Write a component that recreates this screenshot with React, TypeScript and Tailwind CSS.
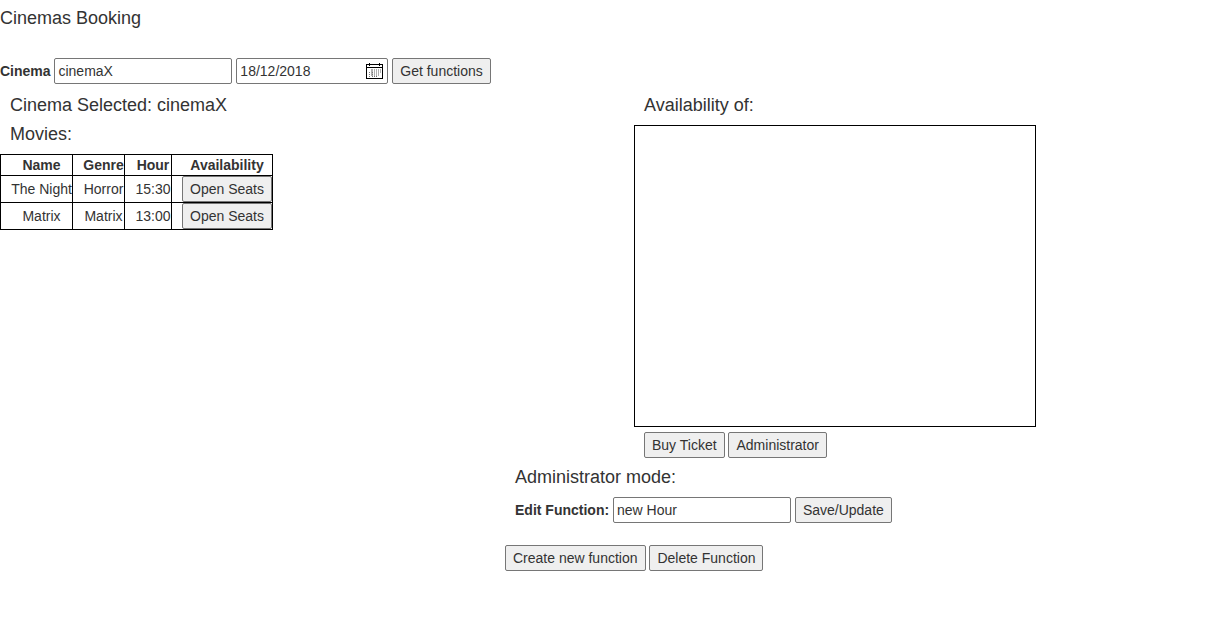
import type { ReactNode } from "react";

const functions = [
  { name: "The Night", genre: "Horror", hour: "15:30" },
  { name: "Matrix", genre: "Matrix", hour: "13:00" },
];

function Button({ children }: { children: ReactNode }) {
  return (
    <button
      type="button"
      className="h-[26px] whitespace-nowrap rounded-[2px] border border-[#767676] bg-[#efefef] px-[7px] align-middle hover:bg-[#e5e5e5]"
    >
      {children}
    </button>
  );
}

function Heading({ children }: { children: ReactNode }) {
  return <h4 className="pl-2.5 text-lg leading-5">{children}</h4>;
}

function CalendarIcon() {
  return (
    <svg width="17" height="16" viewBox="0 0 17 16" shapeRendering="crispEdges" aria-hidden="true">
      <path fill="#000" fillRule="evenodd" d="M0 1h17v15H0zM1 2v2h15V2zM1 5v10h15V5z" />
      <path fill="#000" d="M3 0h1v3H3zM13 0h1v3h-1z" />
      <path
        fill="#b0b0b0"
        d="M5 6h2v7H5zM8 6h1v7H8zM10 6h1v7h-1zM12 6h1v7h-1zM14 6h1v4h-1z"
      />
      <path
        fill="#777"
        d="M3 9h1v1H3zM3 11h1v1H3zM3 13h1v1H3zM6 9h1v1H6zM6 11h1v1H6zM6 13h1v1H6zM8 13h1v1H8zM10 13h1v1h-1z"
      />
    </svg>
  );
}

export default function App() {
  return (
    <div className="bg-white pb-12 pt-2 font-['Liberation_Sans',Arial,sans-serif] text-sm leading-5 text-[#333]">
      <h4 className="text-lg leading-5">Cinemas Booking</h4>

      <form className="mt-[30px]">
        <label htmlFor="cinema" className="align-middle font-bold">
          Cinema
        </label>{" "}
        <input
          id="cinema"
          defaultValue="cinemaX"
          className="h-[26px] w-[178px] rounded-[2px] border border-[#767676] px-[3px] align-middle"
        />{" "}
        <div className="inline-flex h-[26px] w-[152px] items-center rounded-[2px] border border-[#767676] pl-[3px] pr-1 align-middle">
          <input
            aria-label="Date"
            defaultValue="18/12/2018"
            className="min-w-0 flex-1 outline-none"
          />
          <button type="button" aria-label="Open calendar">
            <CalendarIcon />
          </button>
        </div>{" "}
        <Button>Get functions</Button>
      </form>

      <main className="mt-[11px] grid grid-cols-[317fr_289fr]">
        <section>
          <Heading>Cinema Selected: cinemaX</Heading>
          <div className="mt-[9px]">
            <Heading>Movies:</Heading>
          </div>
          <table className="mt-2.5 border-collapse text-center [&_td]:border [&_td]:border-black [&_td]:p-0 [&_td]:pl-2.5 [&_th]:border [&_th]:border-black [&_th]:p-0 [&_th]:pl-2.5">
            <thead>
              <tr>
                <th className="min-w-[72px]">Name</th>
                <th className="min-w-[52px]">Genre</th>
                <th className="min-w-[47px]">Hour</th>
                <th className="min-w-[101px]">Availability</th>
              </tr>
            </thead>
            <tbody>
              {functions.map((f) => (
                <tr key={f.name}>
                  <td>{f.name}</td>
                  <td>{f.genre}</td>
                  <td>{f.hour}</td>
                  <td>
                    <div className="flex">
                      <Button>Open Seats</Button>
                    </div>
                  </td>
                </tr>
              ))}
            </tbody>
          </table>
        </section>

        <section>
          <Heading>Availability of:</Heading>
          <canvas
            width={400}
            height={300}
            aria-label="Seats"
            className="mt-2.5 box-content block border border-black"
          />
          <div className="mt-[5px] pl-2.5">
            <Button>Buy Ticket</Button> <Button>Administrator</Button>
          </div>
        </section>
      </main>

      <div className="mt-[9px] grid grid-cols-12">
        <section className="col-span-7 col-start-6">
          <Heading>Administrator mode:</Heading>
          <div className="mt-2.5 pl-2.5">
            <label htmlFor="hour" className="align-middle font-bold">
              Edit Function:
            </label>{" "}
            <input
              id="hour"
              defaultValue="new Hour"
              className="h-[26px] w-[178px] rounded-[2px] border border-[#767676] px-[3px] align-middle"
            />{" "}
            <Button>Save/Update</Button>
          </div>
          <div className="mt-[22px]">
            <Button>Create new function</Button> <Button>Delete Function</Button>
          </div>
        </section>
      </div>
    </div>
  );
}
